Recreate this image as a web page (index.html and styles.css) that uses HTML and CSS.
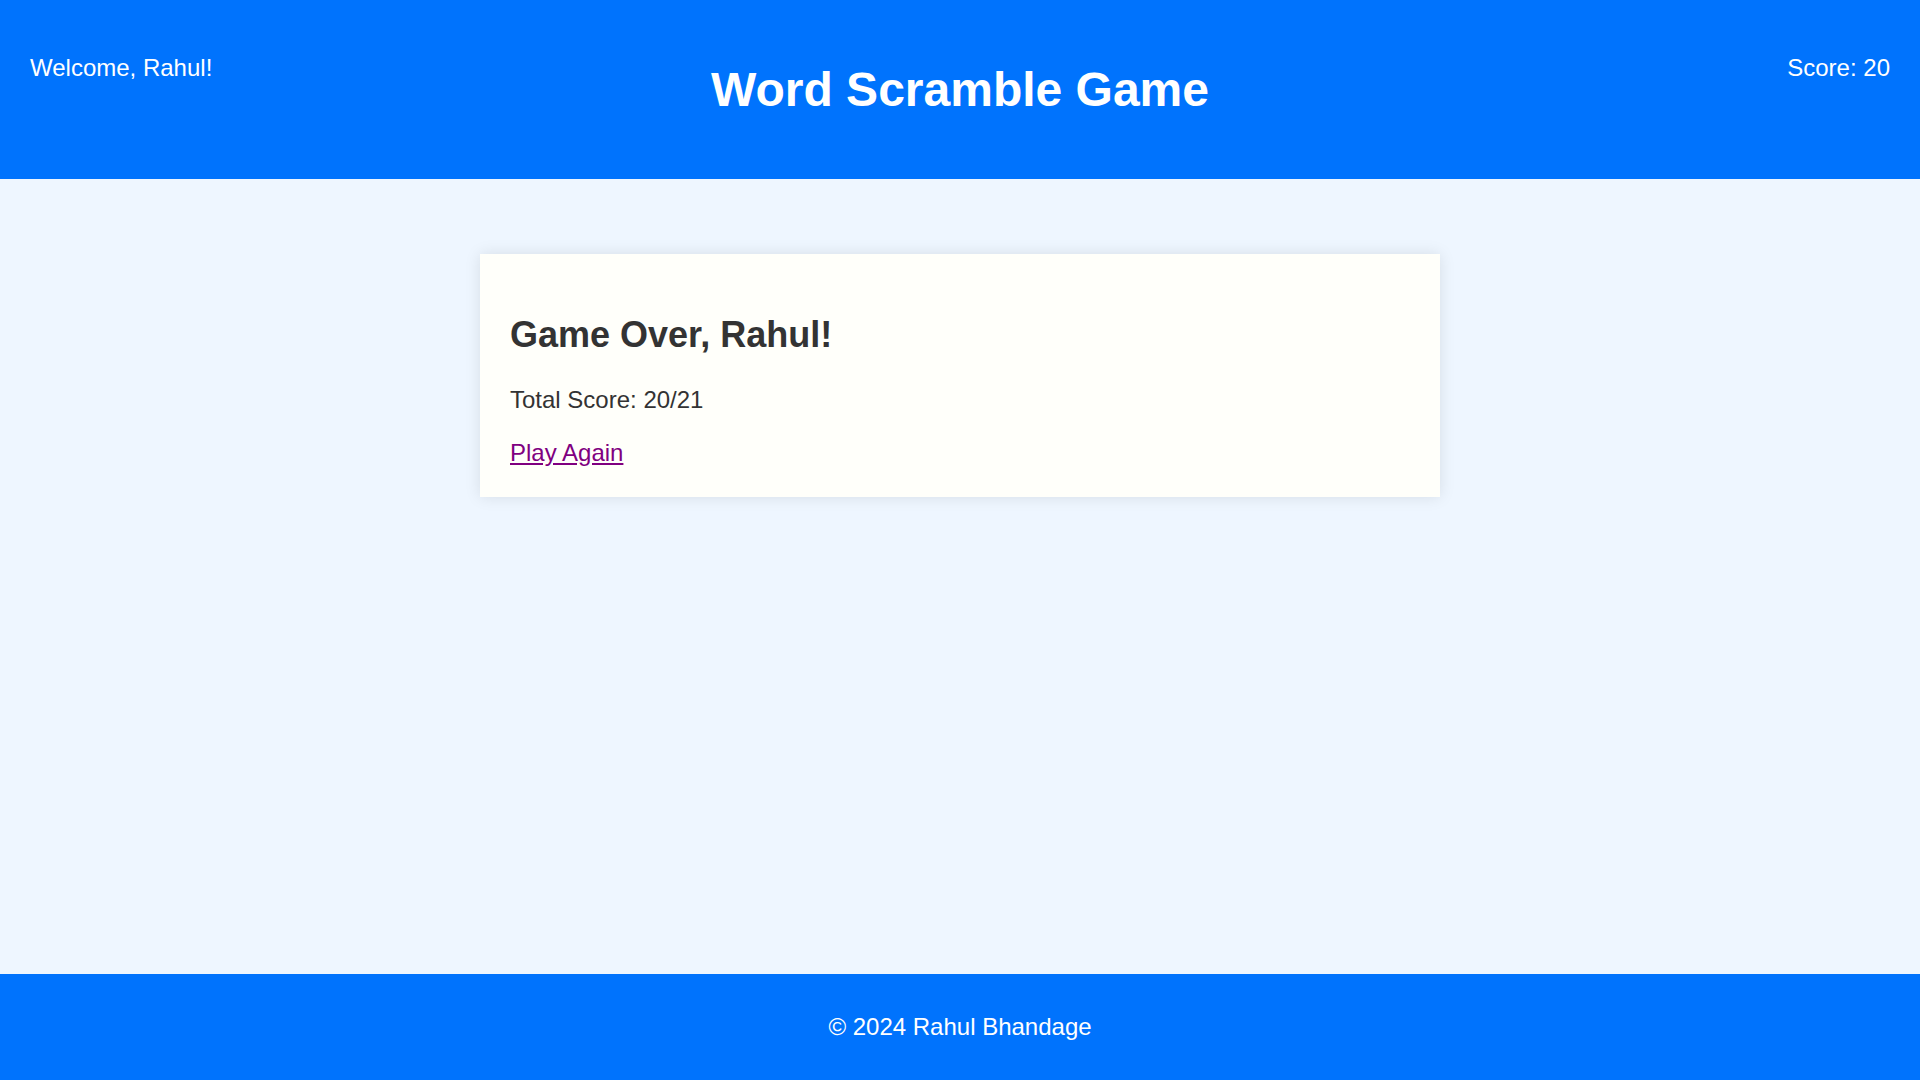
FILE: index.html
```html
<!DOCTYPE html>
<html lang="en">
<head>
<meta charset="utf-8">
<title>Word Scramble Game</title>
<link rel="stylesheet" href="styles.css">
</head>
<body>
<header class="site-header">
  <p class="welcome">Welcome, Rahul!</p>
  <h1 class="title">Word Scramble Game</h1>
  <p class="score">Score: 20</p>
</header>
<main class="content">
  <section class="card">
    <h2 class="card-title">Game Over, Rahul!</h2>
    <p class="total">Total Score: 20/21</p>
    <a class="play-again" href="#">Play Again</a>
  </section>
</main>
<footer class="site-footer">
  <p class="copyright">© 2024 Rahul Bhandage</p>
</footer>
</body>
</html>
```

FILE: styles.css
```css
html, body {
  height: 100%;
}

body {
  margin: 0;
  min-height: 100vh;
  display: flex;
  flex-direction: column;
  font-family: "Liberation Sans", Arial, sans-serif;
  font-size: 24px;
  color: #333333;
  background: #eef6ff;
}

.site-header {
  display: grid;
  grid-template-columns: 1fr auto 1fr;
  align-items: start;
  padding: 30px;
  background: #0073fd;
  color: #ffffff;
}

.welcome,
.score {
  margin: 24px 0;
  font-size: 24px;
}

.score {
  text-align: right;
}

.title {
  margin: 32.16px 0;
  font-size: 48px;
  font-weight: bold;
  text-align: center;
}

.content {
  flex: 1;
  padding-top: 74.5px;
}

.card {
  width: 900px;
  margin: 0 auto;
  padding: 30px;
  background: #fffffa;
  box-shadow: 0 0 15px rgba(0, 0, 0, 0.1);
}

.card-title {
  margin: 29.88px 0;
  font-size: 36px;
  font-weight: bold;
}

.total {
  margin: 24px 0 25px;
  font-size: 24px;
}

.play-again {
  display: block;
  width: max-content;
  color: #800080;
  text-decoration: underline;
}

.site-footer {
  padding: 15px 0;
  background: #0073fd;
  color: #ffffff;
  text-align: center;
}

.copyright {
  margin: 24px 0;
}
```
